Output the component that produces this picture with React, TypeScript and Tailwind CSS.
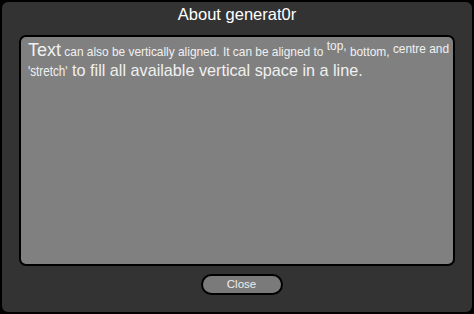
export default function App() {
  return (
    <div className="h-[314px] w-[474px] bg-black p-[2px] font-['Liberation_Sans',Arial,sans-serif]">
      <div className="flex h-full w-full flex-col rounded-[6px] bg-[#333333]">
        <div className="pt-[1px] text-center text-[16.5px] leading-[22px] text-white">About generat0r</div>
        <div className="mx-[17px] mt-[10px] h-[231px] rounded-[7px] border-2 border-black bg-[#808080] px-[7px] pt-[4px] text-[#f0f0f0]">
          <div className="whitespace-nowrap text-[11.9px] leading-[19px]">
            <span className="text-[18px]">Text</span> can also be vertically aligned. It can be aligned to{" "}
            <span className="relative -top-[6px]">top,</span> bottom,{" "}
            <span className="relative -top-[3px]">centre and</span>
          </div>
          <div className="-mt-[1px] whitespace-nowrap text-[11.9px] leading-[18px]">
            <span className="-mr-[10px] inline-block origin-left scale-x-[0.78] text-[15px]">'stretch'</span>{" "}
            <span className="text-[16.2px]">to fill all available vertical space in a line.</span>
          </div>
        </div>
        <div className="flex justify-center pt-[8px] pl-[9px]">
          <button className="h-[21px] w-[82px] rounded-full border-2 border-black bg-[#7a7a7a] text-[11.5px] leading-[17px] text-[#eeeeee]">
            Close
          </button>
        </div>
      </div>
    </div>
  );
}
